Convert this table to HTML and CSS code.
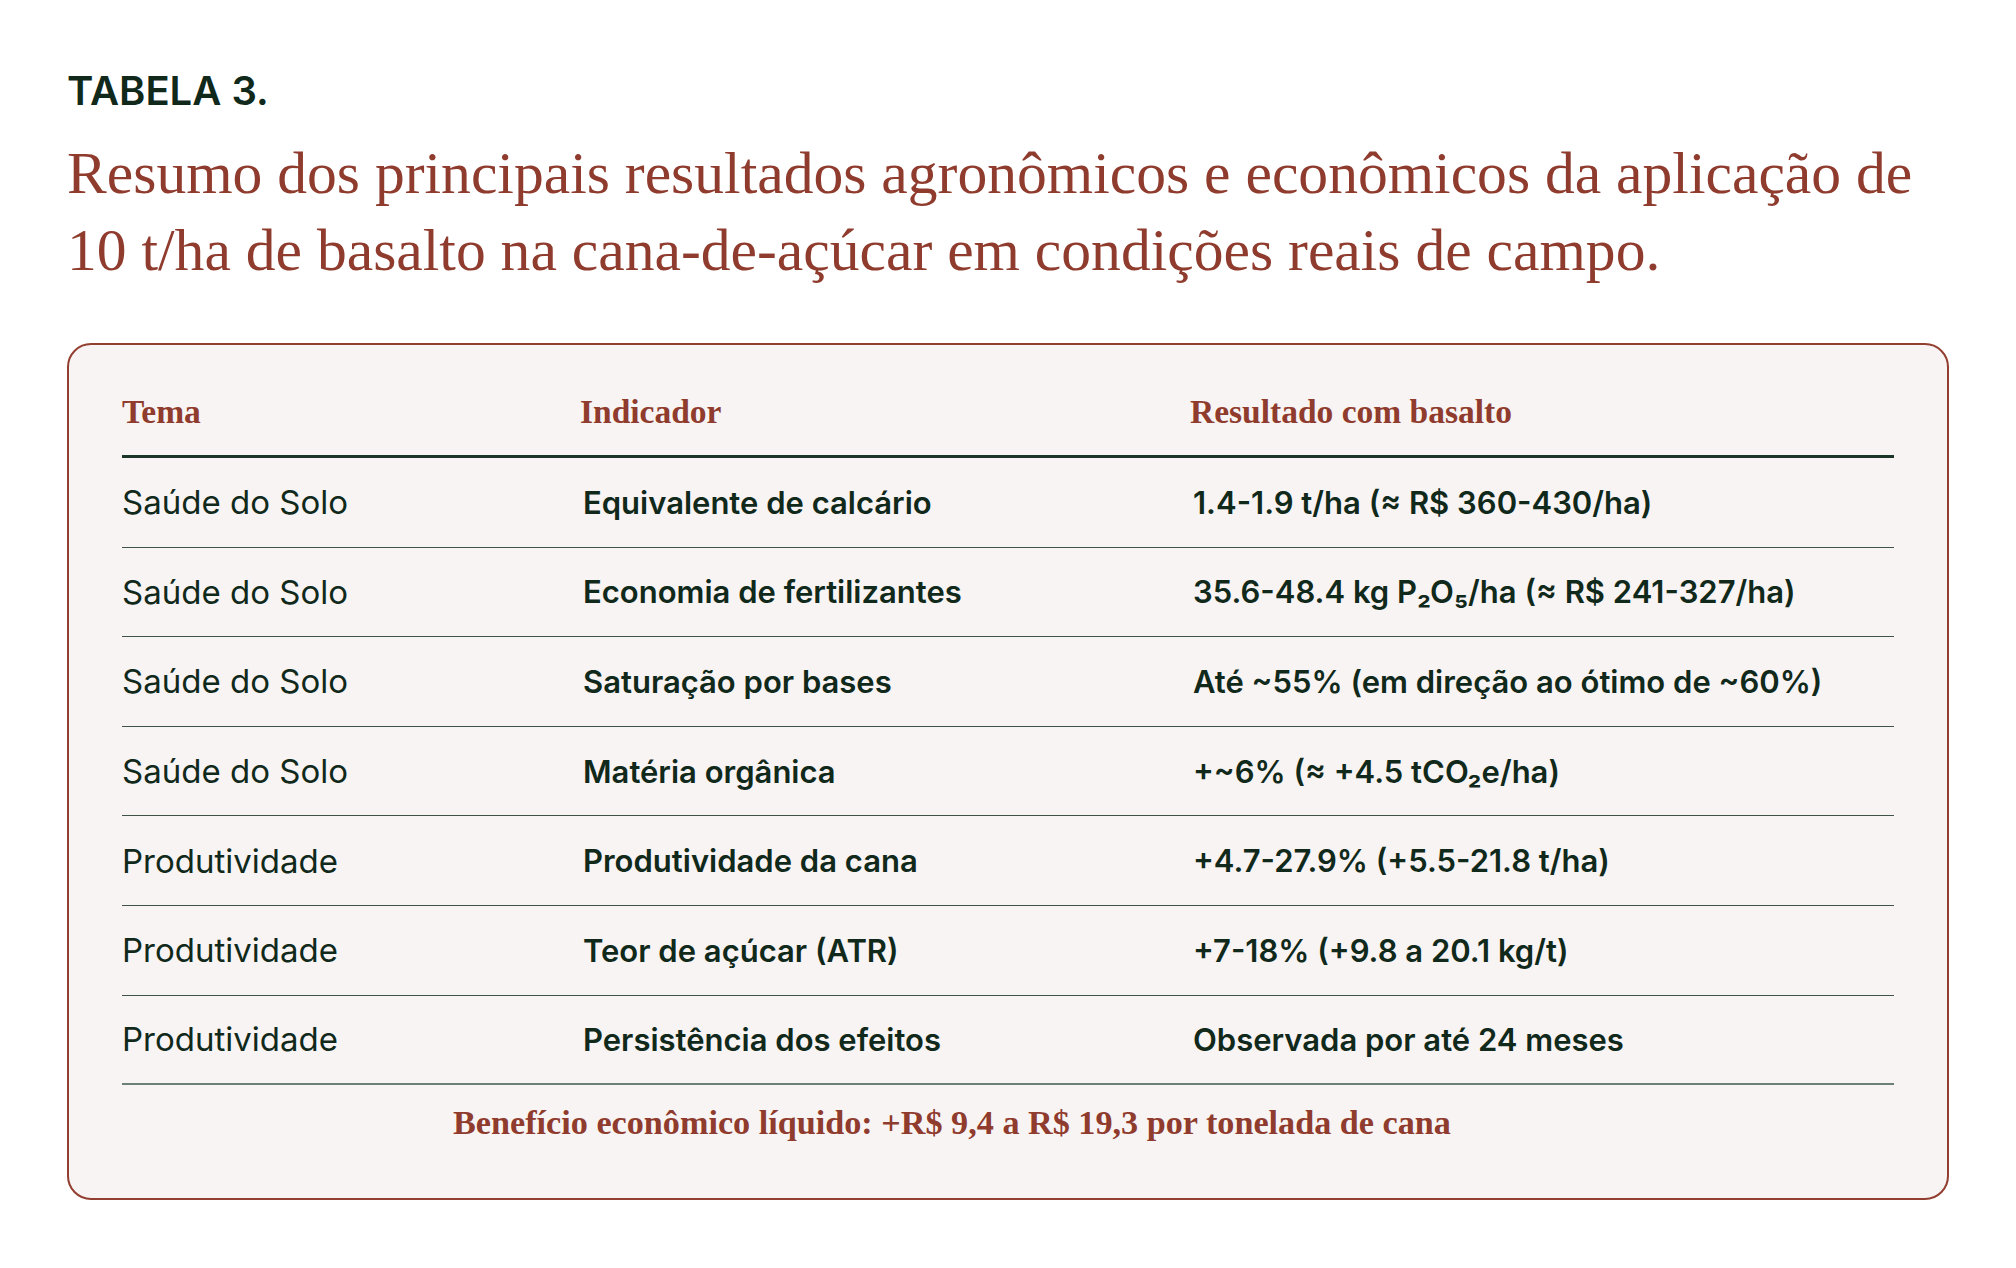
FILE: index.html
```html
<!DOCTYPE html>
<html lang="pt-BR">
<head>
<meta charset="utf-8">
<title>Tabela 3</title>
<link rel="stylesheet" href="styles.css">
</head>
<body>
<main class="page">
  <p class="eyebrow">TABELA 3.</p>
  <h1 class="title">Resumo dos principais resultados agronômicos e econômicos da aplicação de<br>10 t/ha de basalto na cana-de-açúcar em condições reais de campo.</h1>
  <section class="card">
    <table class="results">
      <colgroup>
        <col class="c1"><col class="c2"><col class="c3">
      </colgroup>
      <thead>
        <tr><th>Tema</th><th>Indicador</th><th>Resultado com basalto</th></tr>
      </thead>
      <tbody>
        <tr><td class="tema">Saúde do Solo</td><td class="ind">Equivalente de calcário</td><td class="res">1.4-1.9 t/ha (≈ R$ 360-430/ha)</td></tr>
        <tr><td class="tema">Saúde do Solo</td><td class="ind">Economia de fertilizantes</td><td class="res">35.6-48.4 kg P₂O₅/ha (≈ R$ 241-327/ha)</td></tr>
        <tr><td class="tema">Saúde do Solo</td><td class="ind">Saturação por bases</td><td class="res">Até ~55% (em direção ao ótimo de ~60%)</td></tr>
        <tr><td class="tema">Saúde do Solo</td><td class="ind">Matéria orgânica</td><td class="res">+~6% (≈ +4.5 tCO₂e/ha)</td></tr>
        <tr><td class="tema">Produtividade</td><td class="ind">Produtividade da cana</td><td class="res">+4.7-27.9% (+5.5-21.8 t/ha)</td></tr>
        <tr><td class="tema">Produtividade</td><td class="ind">Teor de açúcar (ATR)</td><td class="res">+7-18% (+9.8 a 20.1 kg/t)</td></tr>
        <tr class="last"><td class="tema">Produtividade</td><td class="ind">Persistência dos efeitos</td><td class="res">Observada por até 24 meses</td></tr>
      </tbody>
    </table>
    <p class="note">Benefício econômico líquido: +R$ 9,4 a R$ 19,3 por tonelada de cana</p>
  </section>
</main>
</body>
</html>
```
FILE: styles.css
```css
html, body {
  margin: 0;
  padding: 0;
  background: #ffffff;
}

.page {
  padding: 67px 67px 0;
}

.eyebrow {
  margin: 0;
  font-family: Inter, "Liberation Sans", sans-serif;
  font-weight: 600;
  font-size: 40px;
  line-height: 48px;
  color: #10291b;
}

.title {
  margin: 20px 0 0;
  font-family: "Liberation Serif", serif;
  font-weight: 400;
  font-size: 59.6px;
  line-height: 77px;
  color: #8f3b2d;
}

.card {
  margin-top: 54px;
  border: 2px solid #923e30;
  border-radius: 24px;
  background: #f8f4f3;
  padding: 20px 53px 55px;
}

.results {
  width: 100%;
  border-collapse: separate;
  border-spacing: 0;
  table-layout: fixed;
}

.c1 { width: 458px; }
.c2 { width: 610px; }
.c3 { width: auto; }

.results th {
  height: 87px;
  padding: 3px 0 0;
  text-align: left;
  vertical-align: middle;
  font-family: "Liberation Serif", serif;
  font-weight: 700;
  font-size: 33.5px;
  color: #8f3b2d;
  border-bottom: 3px solid #1b3526;
}

.results td {
  height: 88.6px;
  padding: 0;
  vertical-align: middle;
  font-family: Inter, "Liberation Sans", sans-serif;
  font-size: 33px;
  color: #10291b;
  border-bottom: 1px solid #3f5446;
}

.results td.tema { font-weight: 400; }
.results td.ind,
.results td.res {
  font-weight: 600;
  font-size: 31px;
  padding-left: 3px;
}

.results tr.last td {
  height: 87.6px;
  border-bottom: 2px solid #6e8075;
}

.note {
  margin: 0;
  padding: 18px 112px 0 0;
  text-align: center;
  font-family: "Liberation Serif", serif;
  font-weight: 700;
  font-size: 34.2px;
  line-height: 40px;
  color: #8f3b2d;
}
```
